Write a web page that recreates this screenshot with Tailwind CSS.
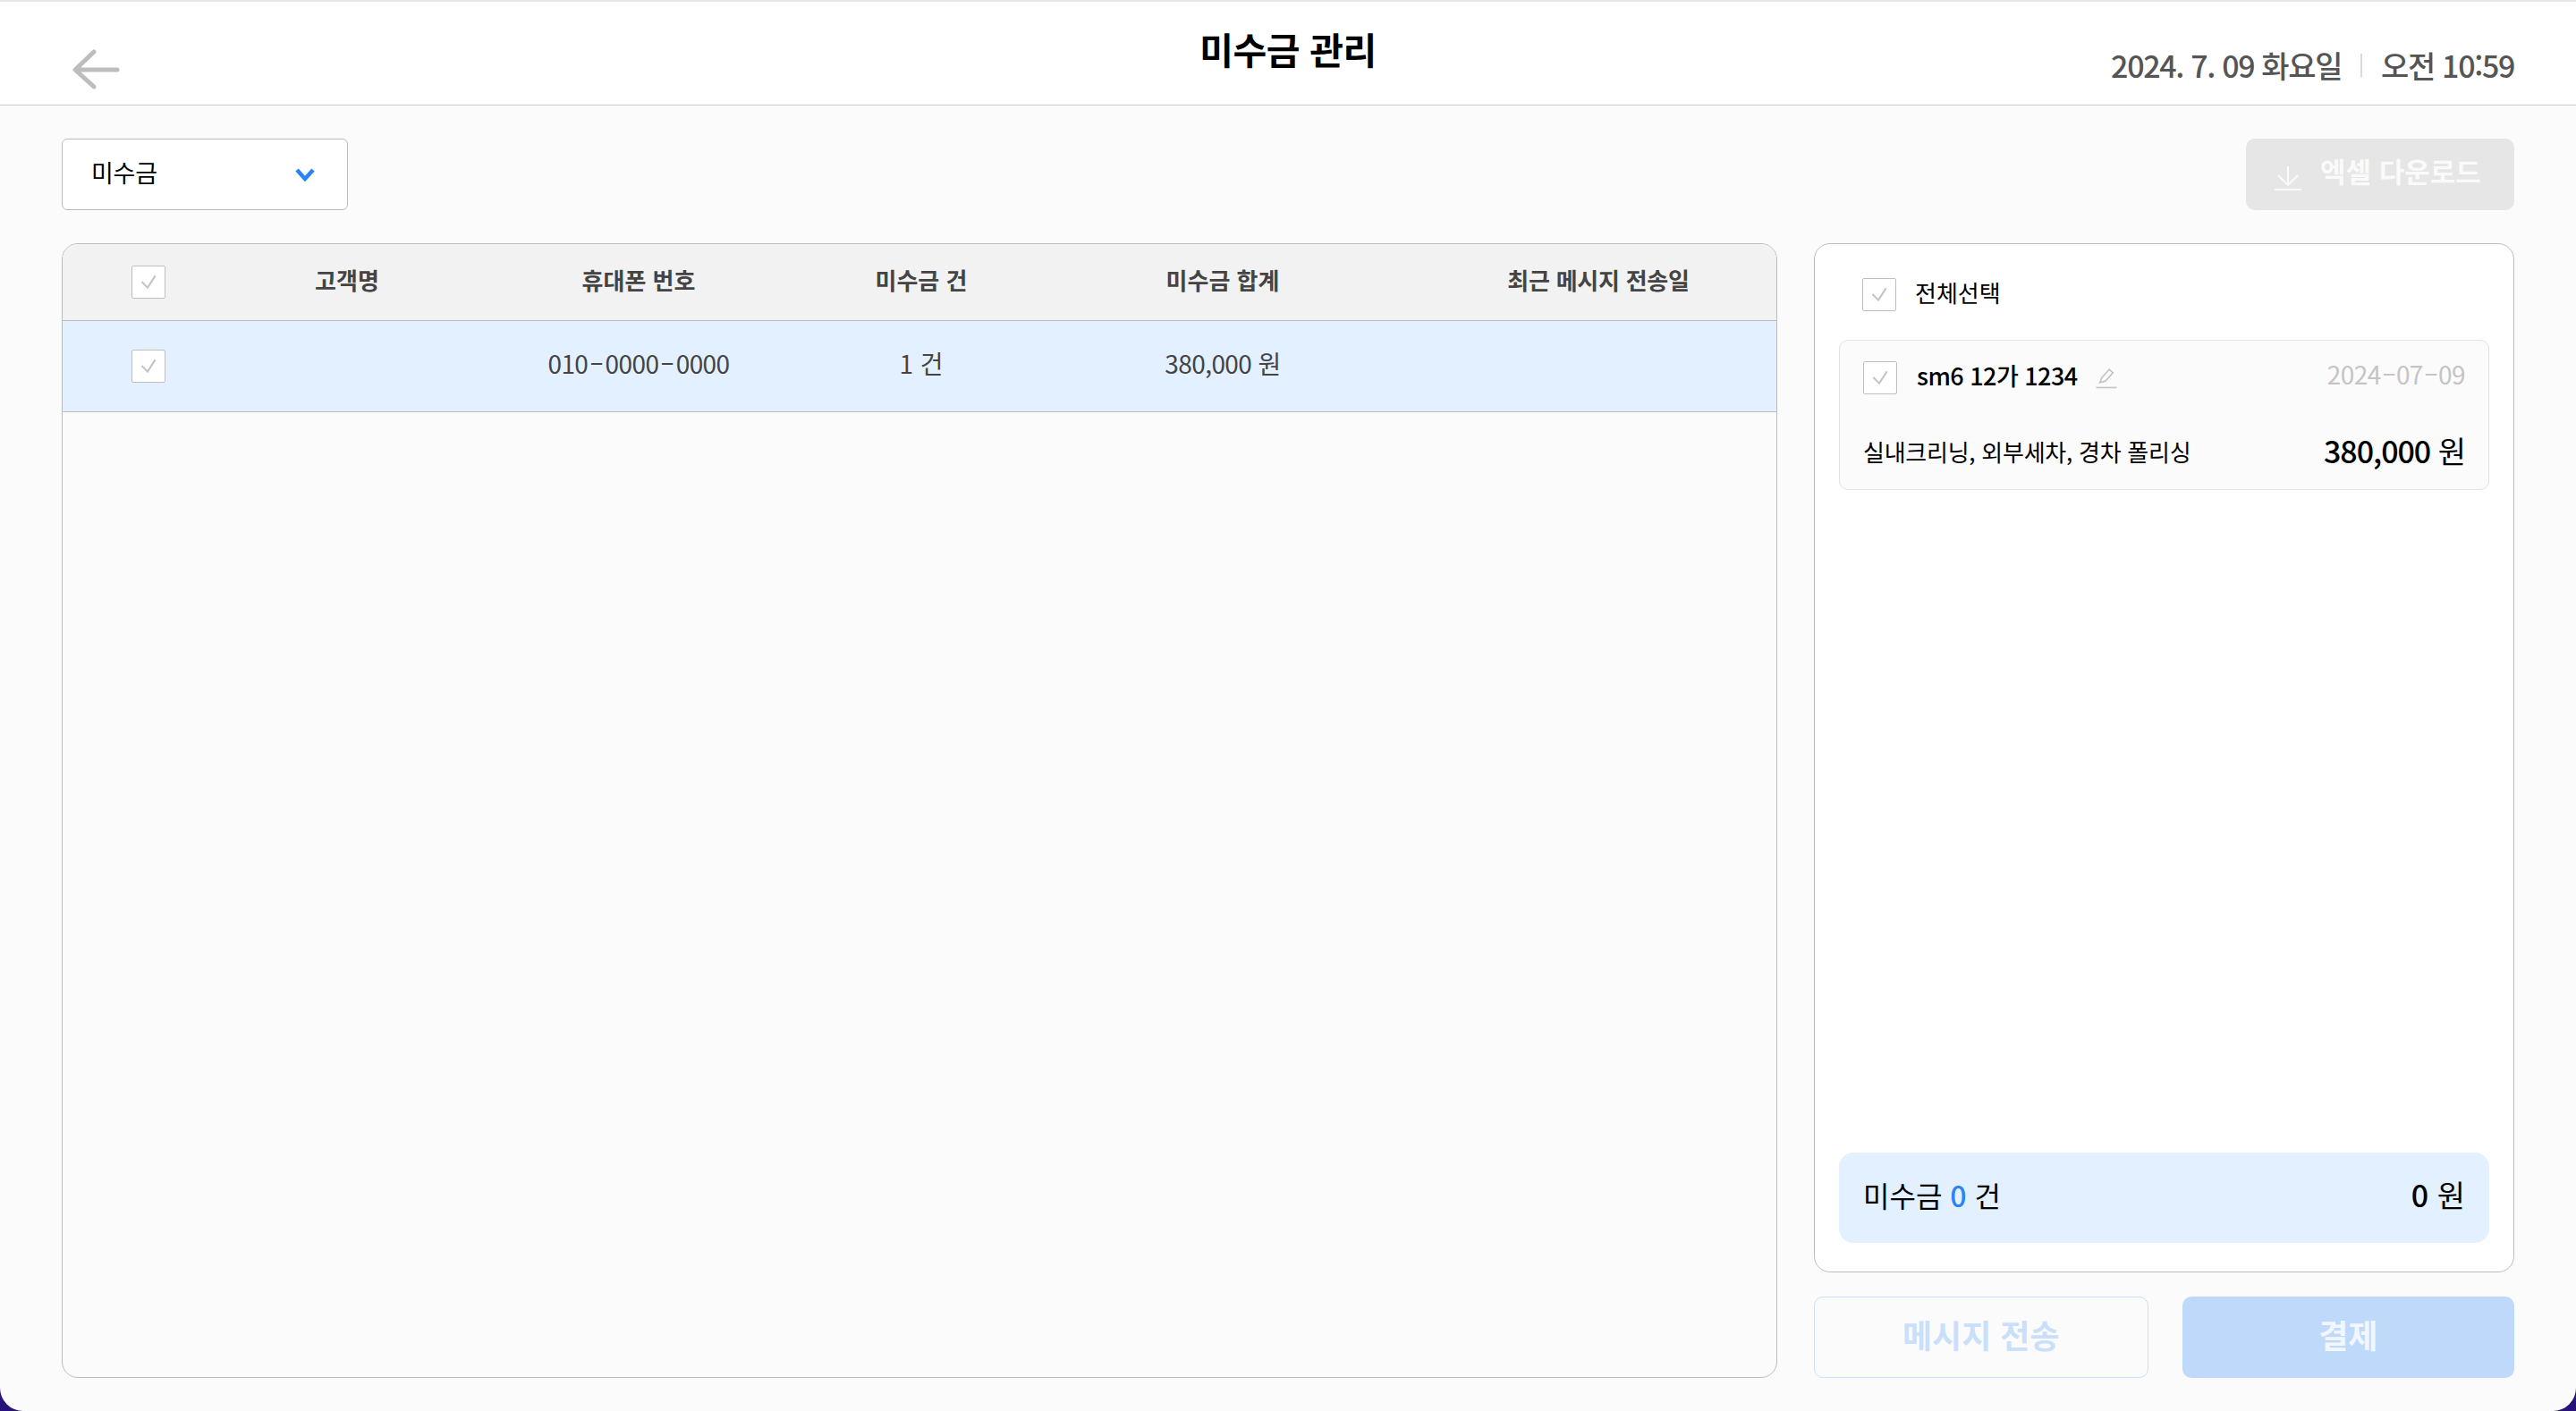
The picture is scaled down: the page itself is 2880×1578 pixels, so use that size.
<!DOCTYPE html>
<html lang="ko">
<head>
<meta charset="utf-8">
<script src="https://cdn.jsdelivr.net/npm/@tailwindcss/browser@4"></script>
</head>
<body class="bg-[#2a1378] font-['Noto_Sans_CJK_KR','Noto_Sans',sans-serif]">
<div class="w-[2880px] h-[1578px] bg-[#fbfbfb] rounded-b-[26px] overflow-hidden flex flex-col">
  <header class="relative h-[118px] shrink-0 bg-white border-t-2 border-t-[#e5e5e5] border-b border-b-[#c5cde0] flex items-center justify-between pl-[81px] pr-[69px]">
    <svg class="mt-[35px]" width="55" height="45" viewBox="0 0 55 45" fill="none" stroke="#bdbdbd" stroke-width="5" stroke-linecap="round" stroke-linejoin="round"><path d="M50 23H4M24 3L3 23L24 42"/></svg>
    <h1 class="absolute left-0 right-0 top-[24px] text-center text-[41px] leading-[56px] font-bold tracking-[-0.01em] text-black">미수금 관리</h1>
    <div class="mt-[27px] flex items-center text-[#555555] text-[34px] leading-[46px] font-medium tracking-[-0.04em]">
      <span>2024. 7. 09 화요일</span>
      <span class="mx-[21px] w-[2px] h-[26px] bg-[#d9d9d9]"></span>
      <span>오전 10:59</span>
    </div>
  </header>
  <main class="flex-1 flex flex-col px-[69px] pt-[37px] pb-[37px]">
    <div class="flex justify-between h-[80px] shrink-0">
      <div class="w-[320px] h-full bg-white border border-[#bcbcbc] rounded-[6px] flex items-center justify-between pl-[32px] pr-[36px]">
        <span class="text-[27px] -mt-[3px] tracking-[-0.01em] text-black">미수금</span>
        <svg width="22" height="16" viewBox="0 0 22 16" fill="none" stroke="#2a84f5" stroke-width="4.5"><path d="M2 3L11 13L20 3"/></svg>
      </div>
      <button class="w-[300px] h-full bg-[#e6e6e6] rounded-[10px] flex items-center pl-[32px] gap-[21px] text-[31px] font-bold text-[#fafafa]">
        <svg class="mt-[7px]" width="30" height="28" viewBox="0 0 30 28" fill="none" stroke="#fafafa" stroke-width="2"><path d="M15 1V22M4 11L15 22L26 11M0 27H30"/></svg>
        <span class="-mt-[7px]">엑셀 다운로드</span>
      </button>
    </div>
    <div class="flex-1 flex gap-[41px] mt-[37px] min-h-0">
      <section class="w-[1918px] shrink-0 border border-[#bcbcbc] rounded-[18px] overflow-hidden flex flex-col">
        <div class="h-[86px] shrink-0 bg-[#f2f2f2] border-b border-[#bcbcbc] grid grid-cols-[192px_252px_400px_232px_442px_1fr] items-center text-center text-[26px] font-bold text-[#444444]">
          <div class="flex justify-center"><span class="w-[38px] h-[37px] bg-white border border-[#bfbfbf] rounded-[2px] flex"><svg width="36" height="35" viewBox="0 0 38 37" fill="none" stroke="#c4c4c4" stroke-width="2.2"><path d="M11 18L18 25L27 11"/></svg></span></div>
          <div class="-mt-[7px]">고객명</div><div class="-mt-[7px]">휴대폰 번호</div><div class="-mt-[7px]">미수금 건</div><div class="-mt-[7px]">미수금 합계</div><div class="-mt-[7px] tracking-[-0.01em]">최근 메시지 전송일</div>
        </div>
        <div class="h-[102px] shrink-0 bg-[#e2f0ff] border-b border-[#bcbcbc] grid grid-cols-[192px_252px_400px_232px_442px_1fr] items-center text-center text-[28px] text-[#444444]">
          <div class="flex justify-center"><span class="w-[38px] h-[37px] bg-white border border-[#bfbfbf] rounded-[2px] flex"><svg width="36" height="35" viewBox="0 0 38 37" fill="none" stroke="#c4c4c4" stroke-width="2.2"><path d="M11 18L18 25L27 11"/></svg></span></div>
          <div></div><div class="-mt-[7px] tracking-[-0.02em]">010<span class="inline-block scale-x-[1.7] mx-[5px]">-</span>0000<span class="inline-block scale-x-[1.7] mx-[5px]">-</span>0000</div><div class="-mt-[7px]">1 건</div><div class="-mt-[7px] tracking-[-0.02em]">380,000 원</div><div></div>
        </div>
      </section>
      <aside class="flex-1 flex flex-col gap-[27px] min-w-0">
        <div class="flex-1 bg-white border border-[#bcbcbc] rounded-[18px] px-[27px] pb-[32px] flex flex-col min-h-0">
          <div class="flex items-center gap-[21px] pl-[26px] pt-[38px]">
            <span class="w-[38px] h-[37px] bg-white border border-[#bfbfbf] rounded-[2px] flex"><svg width="36" height="35" viewBox="0 0 38 37" fill="none" stroke="#c4c4c4" stroke-width="2.2"><path d="M11 18L18 25L27 11"/></svg></span>
            <span class="text-[26px] leading-[37px] -mt-[6px] text-black">전체선택</span>
          </div>
          <div class="mt-[32px] h-[168px] bg-[#fbfbfb] border border-[#e2e2e2] rounded-[10px] px-[26px] flex flex-col">
            <div class="flex items-center justify-between pt-[23px]">
              <div class="flex items-center">
                <span class="w-[38px] h-[37px] bg-white border border-[#bfbfbf] rounded-[2px] flex"><svg width="36" height="35" viewBox="0 0 38 37" fill="none" stroke="#c4c4c4" stroke-width="2.2"><path d="M11 18L18 25L27 11"/></svg></span>
                <span class="ml-[22px] text-[27px] leading-[37px] -mt-[6px] font-medium tracking-[-0.02em] text-black">sm6 12가 1234</span>
                <svg class="ml-[19px]" width="26" height="25" viewBox="0 0 24 24" fill="none" stroke="#c4c4c4" stroke-width="1.6"><path d="M5 17L7 12L15 3L19 6.5L11 15.5L5 17Z"/><path d="M1 22.5H23"/></svg>
              </div>
              <span class="text-[28px] leading-[37px] -mt-[8px] tracking-[-0.02em] text-[#c4c4c4]">2024<span class="inline-block scale-x-[1.7] mx-[4px]">-</span>07<span class="inline-block scale-x-[1.7] mx-[4px]">-</span>09</span>
            </div>
            <div class="flex items-center justify-between mt-[40px]">
              <span class="text-[26px] tracking-[-0.01em] text-black">실내크리닝, 외부세차, 경차 폴리싱</span>
              <span class="text-[34px] leading-[46px] font-medium tracking-[-0.03em] text-black">380,000 <span class="font-normal">원</span></span>
            </div>
          </div>
          <div class="mt-auto h-[101px] shrink-0 bg-[#e2f0ff] rounded-[16px] px-[27px] flex items-center justify-between">
            <span class="text-[32px] text-black -mt-[8px]">미수금 <span class="text-[#2a84f5] font-medium">0</span> 건</span>
            <span class="text-[34px] text-black -mt-[8px]"><span class="font-medium">0</span> 원</span>
          </div>
        </div>
        <div class="h-[91px] shrink-0 flex gap-[38px]">
          <button class="flex-1 pb-[8px] border border-[#c9dffa] rounded-[10px] text-[36px] font-bold text-[#c9dffa]">메시지 전송</button>
          <button class="flex-1 pb-[8px] bg-[#bfd9fb] rounded-[10px] text-[36px] font-bold text-[#f2f7ff]">결제</button>
        </div>
      </aside>
    </div>
  </main>
</div>
</body>
</html>
